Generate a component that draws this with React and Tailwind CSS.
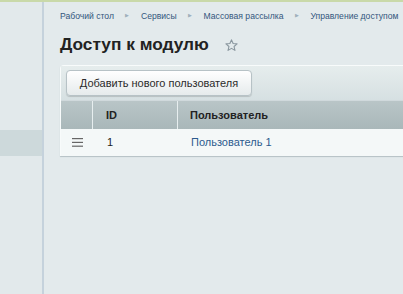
export default function App() {
  return (
    <div className="w-[403px] h-[294px] overflow-hidden bg-[#e3eaec] flex flex-col" style={{ fontFamily: '"Liberation Sans", Arial, sans-serif' }}>
      <div className="h-[2px] bg-[#c9d9a9] shrink-0" />
      <div className="flex flex-1">
        <div className="w-[44px] shrink-0 bg-[#e2e9eb] border-r-[2px] border-[#c5d2dc] flex flex-col">
          <div className="h-[128px]" />
          <div className="h-[26px] bg-[#cdd9db]" />
        </div>
        <div className="flex-1 pl-[16px] pt-[8px] flex flex-col">
          <div className="flex items-center text-[8.6px] text-[#33577d] h-[12px] gap-[11.5px] whitespace-nowrap">
            <span>Рабочий стол</span>
            <span className="text-[#9fb0bb] text-[5px]">▶</span>
            <span>Сервисы</span>
            <span className="text-[#9fb0bb] text-[5px]">▶</span>
            <span>Массовая рассылка</span>
            <span className="text-[#9fb0bb] text-[5px]">▶</span>
            <span>Управление доступом</span>
          </div>
          <div className="flex items-center mt-[13px] h-[20px] whitespace-nowrap">
            <span className="text-[17.3px] font-bold text-[#222]">Доступ к модулю</span>
            <svg className="ml-[15px]" width="15" height="15" viewBox="0 0 24 24" fill="none" stroke="#8a979f" strokeWidth="1.8" strokeLinejoin="round">
              <path d="M12 3l2.6 5.8 6.3.6-4.8 4.2 1.4 6.2L12 16.6l-5.5 3.2 1.4-6.2-4.8-4.2 6.3-.6z" />
            </svg>
          </div>
          <div className="mt-[10px] w-[400px] rounded-tl-[4px] border-t border-l border-[#f8fbfb] shadow-[0_1px_1px_rgba(150,165,170,0.6)] flex flex-col">
            <div className="h-[34px] bg-gradient-to-b from-[#e6eded] to-[#d6e0e2] flex items-center pl-[5px]">
              <div className="h-[26px] w-[186px] justify-center flex items-center rounded-[4px] border border-[#b7c2c6] bg-gradient-to-b from-[#ffffff] to-[#e6ebec] shadow-[0_1px_1px_rgba(0,0,0,0.15)] text-[11px] text-[#2b2b2b] whitespace-nowrap">
                Добавить нового пользователя
              </div>
            </div>
            <div className="h-[29px] bg-gradient-to-b from-[#b9c5c7] to-[#a9b7b9] border-t border-[#d0d9dc] flex text-[11px] font-bold text-[#222]">
              <div className="w-[32px] border-r border-[#e7eeef]" />
              <div className="w-[85px] border-r border-[#e7eeef] flex items-center pl-[13px]">ID</div>
              <div className="flex-1 flex items-center pl-[12px]">Пользователь</div>
            </div>
            <div className="h-[27px] bg-[#f4f8f8] flex items-center text-[11px]">
              <div className="w-[32px] flex justify-center">
                <svg width="11" height="9" viewBox="0 0 11 9"><rect x="0" y="0" width="11" height="1.2" fill="#666" /><rect x="0" y="3.8" width="11" height="1.2" fill="#666" /><rect x="0" y="7.6" width="11" height="1.2" fill="#666" /></svg>
              </div>
              <div className="w-[85px] pl-[14px] text-[#222]">1</div>
              <div className="flex-1 pl-[13px] text-[#2c5b8e]">Пользователь 1</div>
            </div>
          </div>
        </div>
      </div>
    </div>
  );
}
